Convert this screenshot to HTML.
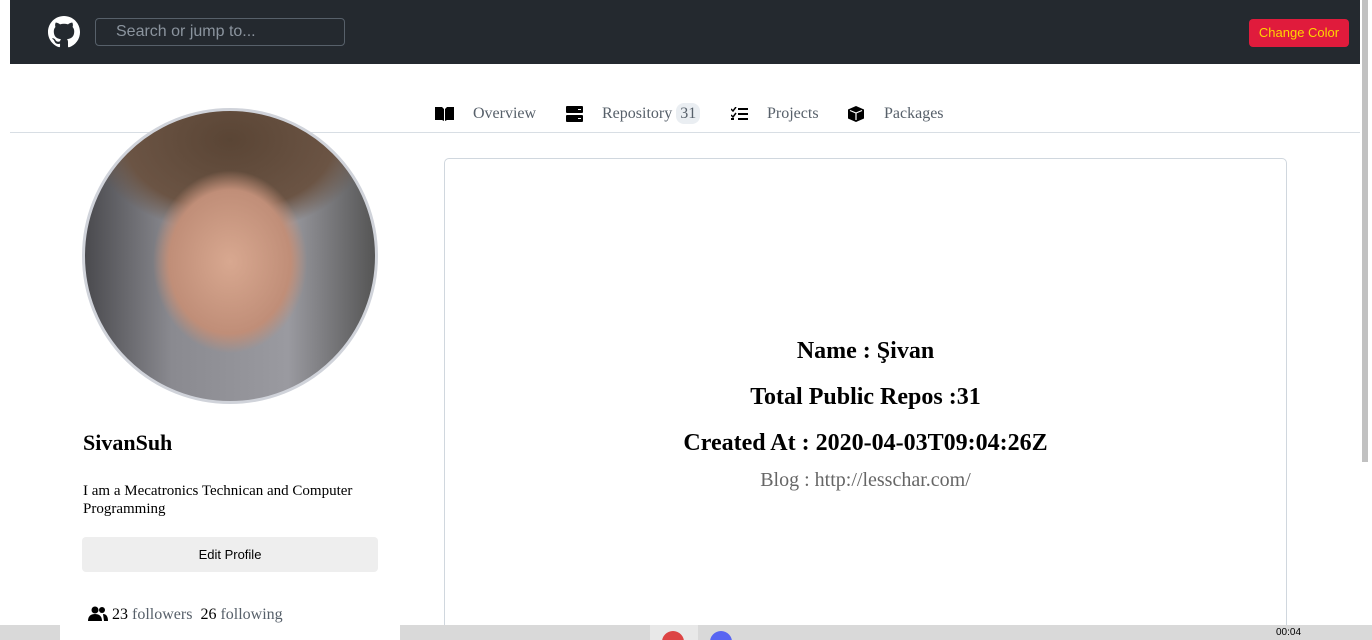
<!DOCTYPE html>
<html><head><meta charset="utf-8"><style>
*{margin:0;padding:0;box-sizing:border-box}
body{width:1372px;height:640px;overflow:hidden;background:#fff;position:relative;font-family:"Liberation Serif",serif}
.hdr{position:absolute;left:10px;top:0;width:1350px;height:64px;background:#24292f}
.search{position:absolute;left:85px;top:18px;width:250px;height:28px;border:1px solid #57606a;border-radius:4px;color:#8b949e;font:16px "Liberation Sans",sans-serif;padding:4px 20px}
.btn{position:absolute;left:1239px;top:19px;width:100px;height:28px;background:#e01b3c;border-radius:4px;color:#ffd600;font:13px "Liberation Sans",sans-serif;text-align:center;line-height:28px}
.nav{position:absolute;top:104px;font-size:16px;color:#57606a}
.line{position:absolute;left:10px;top:132px;width:1350px;height:1px;background:#d8dee4}
.av{position:absolute;left:82px;top:108px;width:296px;height:296px;border-radius:50%;border:3px solid #d0d3da;background:radial-gradient(ellipse 38% 45% at 50% 52%,#d8a890 0,#c08e78 55%,transparent 70%),radial-gradient(ellipse 60% 40% at 50% 10%,#5a4535 0,#6b5444 60%,transparent 80%),linear-gradient(90deg,#4a4a4e,#8a8a90 30%,#9a9aa0 70%,#555)}
.card{position:absolute;left:444px;top:158px;width:843px;height:480px;border:1px solid #d0d7de;border-radius:5px;text-align:center}
.card h2{font-size:24px;font-weight:bold;color:#000;line-height:28px}
.sb{position:absolute;right:0;top:0;width:12px;height:625px;background:#fff}
.sb div{position:absolute;left:2px;top:0;width:6px;height:462px;background:#c1c1c1}
.tb{position:absolute;left:0;top:625px;width:1372px;height:15px;background:#d9d9d9;overflow:hidden}
</style></head><body>
<div class="hdr">
<svg style="position:absolute;left:38px;top:16px" width="32" height="32" viewBox="0 0 16 16"><path fill="#fff" d="M8 0C3.58 0 0 3.58 0 8c0 3.540 2.29 6.53 5.47 7.590.4.07.55-.17.55-.38v-1.33c-2.230.48-2.7-1.070-2.7-1.070-.36-.93-.89-1.17-.89-1.170-.73-.5.05-.49.05-.49.8.06 1.23.83 1.23.83.71 1.23 1.87.87 2.33.66.07-.52.28-.87.51-1.07-1.78-.2-3.64-.89-3.64-3.95 0-.87.31-1.59.82-2.15-.08-.2-.36-1.02.08-2.12 0 0 .67-.21 2.2.82a7.6 7.6 0 014 0c1.53-1.04 2.2-.82 2.2-.82.44 1.1.16 1.92.08 2.12.51.56.82 1.27.82 2.15 0 3.07-1.87 3.75-3.65 3.95.29.25.54.73.54 1.48v2.2c0 .21.15.46.55.38A8 8 0 0016 8c0-4.42-3.58-8-8-8z"/></svg>
<div class="search">Search or jump to...</div>
<div class="btn">Change Color</div>
</div>
<svg style="position:absolute;left:435px;top:106px" width="19" height="16" viewBox="0 0 19 16"><path d="M0 1h7l2 2v12l-2-1H0zM19 1h-7l-2 2v12l2-1h7z"/></svg>
<div class="nav" style="left:473px;top:105px">Overview</div>
<svg style="position:absolute;left:566px;top:106px" width="17" height="16"><rect y="0" width="17" height="7" rx="1"/><rect y="9" width="17" height="7" rx="1"/><rect x="12" y="3" width="3" height="1" fill="#fff"/><rect x="12" y="12" width="3" height="1" fill="#fff"/></svg>
<div class="nav" style="left:602px;top:105px">Repository <span style="background:#eaeef2;border-radius:8px;padding:2px 4px">31</span></div>
<svg style="position:absolute;left:731px;top:107px" width="17" height="14"><path d="M0 2l2 2 3-4M0 8l2 2 3-4" stroke="#000" fill="none" stroke-width="1.5"/><rect x="7" y="1" width="10" height="2"/><rect x="7" y="6" width="10" height="2"/><rect x="7" y="11" width="10" height="2"/><rect x="0" y="11" width="3" height="2"/></svg>
<div class="nav" style="left:767px;top:105px">Projects</div>
<svg style="position:absolute;left:848px;top:106px" width="16" height="16" viewBox="0 0 16 16"><path d="M8 0l8 3.5v9L8 16 0 12.5v-9z"/><path d="M2 4.5l6 2.5 6-2.5M8 7v7" stroke="#fff" fill="none" stroke-width="1.2"/></svg>
<div class="nav" style="left:884px;top:105px">Packages</div>
<div class="line"></div>
<div class="av"></div>
<div style="position:absolute;left:83px;top:430px;font-size:22px;font-weight:bold">SivanSuh</div>
<div style="position:absolute;left:83px;top:482px;width:300px;font-size:15px;line-height:18px">I am a Mecatronics Technican and Computer Programming</div>
<div style="position:absolute;left:82px;top:537px;width:296px;height:35px;background:#eeeeee;border-radius:4px;font:13px 'Liberation Sans',sans-serif;text-align:center;line-height:35px">Edit Profile</div>
<svg style="position:absolute;left:88px;top:606px" width="20" height="16" viewBox="0 0 20 16"><circle cx="7" cy="4" r="3.5"/><path d="M0 15c0-5 3-7 7-7s7 2 7 7z"/><circle cx="14" cy="4" r="3"/><path d="M15 8c3 0 5 2 5 7h-4z"/></svg>
<div style="position:absolute;left:112px;top:606px;font-size:16px">23 <span style="color:#57606a">followers</span>&nbsp; 26 <span style="color:#57606a">following</span></div>
<div class="card">
<h2 style="margin-top:178px">Name : Şivan</h2>
<h2 style="margin-top:18px">Total Public Repos :31</h2>
<h2 style="margin-top:18px">Created At : 2020-04-03T09:04:26Z</h2>
<div style="font-size:20px;color:#666;margin-top:12px">Blog : http://lesschar.com/</div>
</div>
<div class="sb"><div></div></div>
<div class="tb"><div style="position:absolute;left:60px;top:0;width:340px;height:15px;background:#fff"></div><div style="position:absolute;left:650px;top:0;width:48px;height:15px;background:#e8e8e8"></div><div style="position:absolute;left:662px;top:6px;width:22px;height:22px;border-radius:50%;background:#d44"></div><div style="position:absolute;left:710px;top:6px;width:22px;height:22px;border-radius:50%;background:#5865f2"></div><div style="position:absolute;left:1276px;top:2px;font:10px 'Liberation Sans',sans-serif">00:04</div></div>
</body></html>
